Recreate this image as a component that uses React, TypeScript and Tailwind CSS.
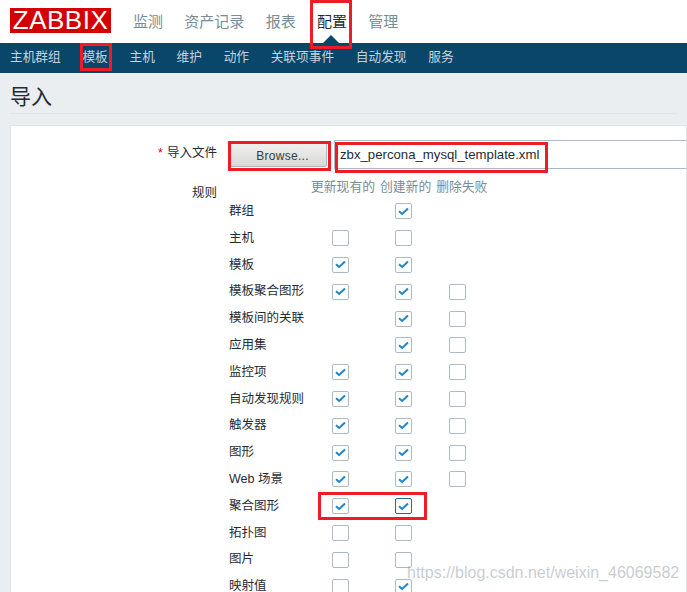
const font = { fontFamily: '"Liberation Sans", "Noto Sans CJK SC", sans-serif' };

type Row = { label: string; update?: boolean; create?: boolean; del?: boolean };
// undefined = no box, true = checked, false = empty
const rows: Row[] = [
  { label: "群组", create: true },
  { label: "主机", update: false, create: false },
  { label: "模板", update: true, create: true },
  { label: "模板聚合图形", update: true, create: true, del: false },
  { label: "模板间的关联", create: true, del: false },
  { label: "应用集", create: true, del: false },
  { label: "监控项", update: true, create: true, del: false },
  { label: "自动发现规则", update: true, create: true, del: false },
  { label: "触发器", update: true, create: true, del: false },
  { label: "图形", update: true, create: true, del: false },
  { label: "Web 场景", update: true, create: true, del: false },
  { label: "聚合图形", update: true, create: true },
  { label: "拓扑图", update: false, create: false },
  { label: "图片", update: false, create: false },
  { label: "映射值", update: false, create: true },
];

const topNav = ["监测", "资产记录", "报表", "配置", "管理"];
const subNav = ["主机群组", "模板", "主机", "维护", "动作", "关联项事件", "自动发现", "服务"];

function Box({ value, focus }: { value?: boolean; focus?: boolean }) {
  if (value === undefined) return <div className="w-[17px] h-4" />;
  return (
    <div
      className={
        "w-[17px] h-4 rounded-[2px] border bg-white flex items-center justify-center " +
        (focus ? "border-[#1f6a9e]" : "border-[#acbbc7]")
      }
    >
      {value && (
        <svg width="11" height="9" viewBox="0 0 11 9">
          <path d="M1 4.2 L4.2 7 L10 1.5" fill="none" stroke="#1f85c7" strokeWidth="2" />
        </svg>
      )}
    </div>
  );
}

export default function App() {
  return (
    <div style={font} className="relative w-[687px] h-[592px] overflow-hidden bg-[#ebeef0]">
      {/* header */}
      <div className="h-[43px] bg-white flex items-start pl-[10px] pt-2">
        <div className="w-[101px] h-[25px] bg-[#d40000] text-white text-[26px] leading-[25px] text-center tracking-[0.5px]">
          ZABBIX
        </div>
        <div className="flex gap-[21.3px] ml-[22px] pt-[4px] text-[15px] leading-5 text-[#768d99]">
          {topNav.map((t) => (
            <span key={t} className={t === "配置" ? "text-[#1f2c33]" : ""}>
              {t}
            </span>
          ))}
        </div>
      </div>

      {/* sub nav */}
      <div className="h-[30px] bg-[#0a466a] flex items-center gap-[21.7px] pl-[10px] text-[12.7px] text-[#c5d3dc]">
        {subNav.map((t) => (
          <span key={t}>{t}</span>
        ))}
      </div>

      {/* title */}
      <div className="mx-[10px] h-[41px] border-b border-[#dfe4e7] flex items-center text-[21px] text-[#1f2c33] pt-[8px]">
        导入
      </div>

      {/* form */}
      <div className="ml-[10px] mt-[11px] bg-white border border-[#dfe4e7] h-[600px] pt-[14px] text-[12.5px] text-[#1f2c33]">
        <div className="flex items-center h-[29px]">
          <div className="w-[206px] text-right -mt-[2px]">
            <span className="text-[#d40000] mr-1">*</span>导入文件
          </div>
          <div className="ml-[13px] w-[97px] h-[25px] rounded-[2px] border border-[#acbbc7] bg-gradient-to-b from-[#f1f1f0] to-[#d9d9d6] flex items-center justify-center pl-[8px] pt-[2px] text-[#3a3a3a] text-[12px] tracking-[0.3px]">
            Browse...
          </div>
          <div className="ml-[7px] flex-1 h-[29px] border border-[#acbbc7] border-r-0 flex items-center pl-[5px] pt-[1px] text-[13.2px] whitespace-nowrap">
            zbx_percona_mysql_template.xml
          </div>
        </div>

        <div className="flex mt-[8px]">
          <div className="w-[206px] text-right leading-5 mt-[6px]">规则</div>
          <div className="ml-[12px]">
            <div className="flex h-5 leading-5 text-[#768d99] pl-[82px] gap-[5px] text-[12.8px]">
              <span>更新现有的</span>
              <span>创建新的</span>
              <span>删除失败</span>
            </div>
            <div className="flex flex-col mt-[1px]">
              {rows.map((r) => (
                <div key={r.label} className="flex items-center h-[26.8px]">
                  <div className="w-[103px] whitespace-nowrap">{r.label}</div>
                  <Box value={r.update} />
                  <div className="w-[46px]" />
                  <Box value={r.create} focus={r.label === "聚合图形"} />
                  <div className="w-[37px]" />
                  <Box value={r.del} />
                </div>
              ))}
            </div>
          </div>
        </div>
      </div>

      {/* active tab arrow */}
      <div className="absolute left-[323px] top-[35px] w-0 h-0 border-x-[8px] border-x-transparent border-b-[8px] border-b-[#0a466a]" />

      {/* red annotations */}
      <div className="absolute left-[310px] top-0 w-[42px] h-[49px] border-[3px] border-[#ee1c25]" />
      <div className="absolute left-[80px] top-[43px] w-[32px] h-[28px] border-[3px] border-[#ee1c25]" />
      <div className="absolute left-[228px] top-[141px] w-[103px] h-[30px] border-[3px] border-[#ee1c25]" />
      <div className="absolute left-[335px] top-[142px] w-[213px] h-[31px] border-[3px] border-[#ee1c25]" />
      <div className="absolute left-[318px] top-[492px] w-[109px] h-[28px] border-[3px] border-[#ee1c25]" />

      {/* watermark */}
      <div className="absolute left-[407px] top-[563px] text-[16px] leading-5 text-[#8f9aa3]/50">
        https://blog.csdn.net/weixin_46069582
      </div>
    </div>
  );
}
